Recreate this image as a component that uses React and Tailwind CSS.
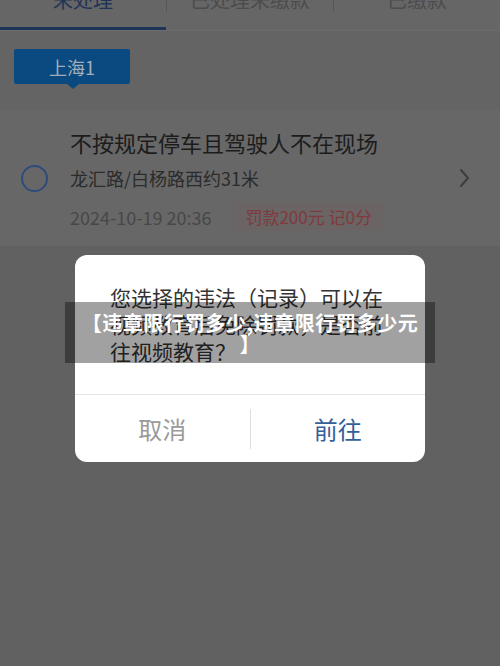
export default function App() {
  const font = { fontFamily: '"Noto Sans CJK SC", "Noto Sans", sans-serif' };
  return (
    <div
      className="relative w-[500px] h-[666px] overflow-hidden bg-[#616161]"
      style={font}
    >
      {/* Tab bar */}
      <div className="relative h-[31px] bg-[#666666] border-b border-[#6c6c6c] flex">
        <div className="relative flex-1 flex justify-center">
          <span className="-mt-[14px] text-[20px] leading-[28px] text-[#1f3456]">未处理</span>
          <div className="absolute left-0 right-0 bottom-0 h-[3px] bg-[#1e3358]" />
        </div>
        <div className="w-px h-[12px] bg-[#575757]" />
        <div className="flex-1 flex justify-center">
          <span className="-mt-[14px] text-[20px] leading-[28px] text-[#4c4c4c]">已处理未缴款</span>
        </div>
        <div className="w-px h-[12px] bg-[#575757]" />
        <div className="flex-1 flex justify-center">
          <span className="-mt-[14px] text-[20px] leading-[28px] text-[#4c4c4c]">已缴款</span>
        </div>
      </div>

      {/* Region tag area */}
      <div className="h-[79px] bg-[#646464] pt-[18px] pl-[14px]">
        <div className="relative w-[116px] h-[35px] bg-[#0b4a80] rounded-[2px] flex items-center justify-center">
          <span className="text-[18px] leading-none text-[#a3adb8]">上海1</span>
          <div className="absolute left-[53px] -bottom-[5px] w-0 h-0 border-l-[6px] border-r-[6px] border-t-[5px] border-l-transparent border-r-transparent border-t-[#0b4a80]" />
        </div>
      </div>

      {/* Card */}
      <div className="h-[136px] bg-[#676767] flex items-center">
        <div className="w-[70px] flex justify-center pr-[2px]">
          <div className="w-[27px] h-[27px] rounded-full border-[2px] border-[#2e4b7c]" />
        </div>
        <div className="flex-1 self-start pt-[17px] flex flex-col">
          <div className="text-[22px] leading-[30px] text-[#1c1c1c]">不按规定停车且驾驶人不在现场</div>
          <div className="text-[18px] leading-[26px] text-[#2b2b2b] mt-[8px]">龙汇路/白杨路西约31米</div>
          <div className="flex items-center mt-[12px]">
            <span className="text-[18px] leading-[24px] text-[#474747]">2024-10-19 20:36</span>
            <span className="ml-[22px] h-[28px] px-[12px] flex items-center bg-[#6a6464] text-[17px] text-[#7f3a3d]">罚款200元 记0分</span>
          </div>
        </div>
        <div className="w-[60px] flex justify-center pr-[10px]">
          <svg width="12" height="20" viewBox="0 0 12 20" fill="none">
            <path d="M2 2 L9 10 L2 18" stroke="#3d3d3d" strokeWidth="2" strokeLinecap="round" strokeLinejoin="round" />
          </svg>
        </div>
      </div>

      {/* Dialog */}
      <div className="absolute left-[75px] top-[255px] w-[350px] h-[207px] bg-white rounded-[12px] flex flex-col">
        <div className="px-[35px] pt-[29px] h-[139px] text-[21px] leading-[27px] text-[#333333]">
          您选择的违法（记录）可以在视频教育后免除罚款，是否前往视频教育？
        </div>
        <div className="h-px bg-[#e4e4e4]" />
        <div className="flex-1 flex items-center">
          <div className="flex-1 text-center text-[24px] text-[#9a9a9a]">取消</div>
          <div className="w-px h-[40px] bg-[#dddddd]" />
          <div className="flex-1 text-center text-[24px] text-[#33609a]">前往</div>
        </div>
      </div>

      {/* Banner overlay */}
      <div className="absolute left-[65px] top-[302px] w-[370px] h-[61px] bg-black/[0.37] flex items-center justify-center px-[6px]">
        <p className="text-center text-white font-bold text-[20px] leading-[21px] tracking-[0.6px]">
          【违章限行罚多少,违章限行罚多少元
          <br />
          】
        </p>
      </div>
    </div>
  );
}
